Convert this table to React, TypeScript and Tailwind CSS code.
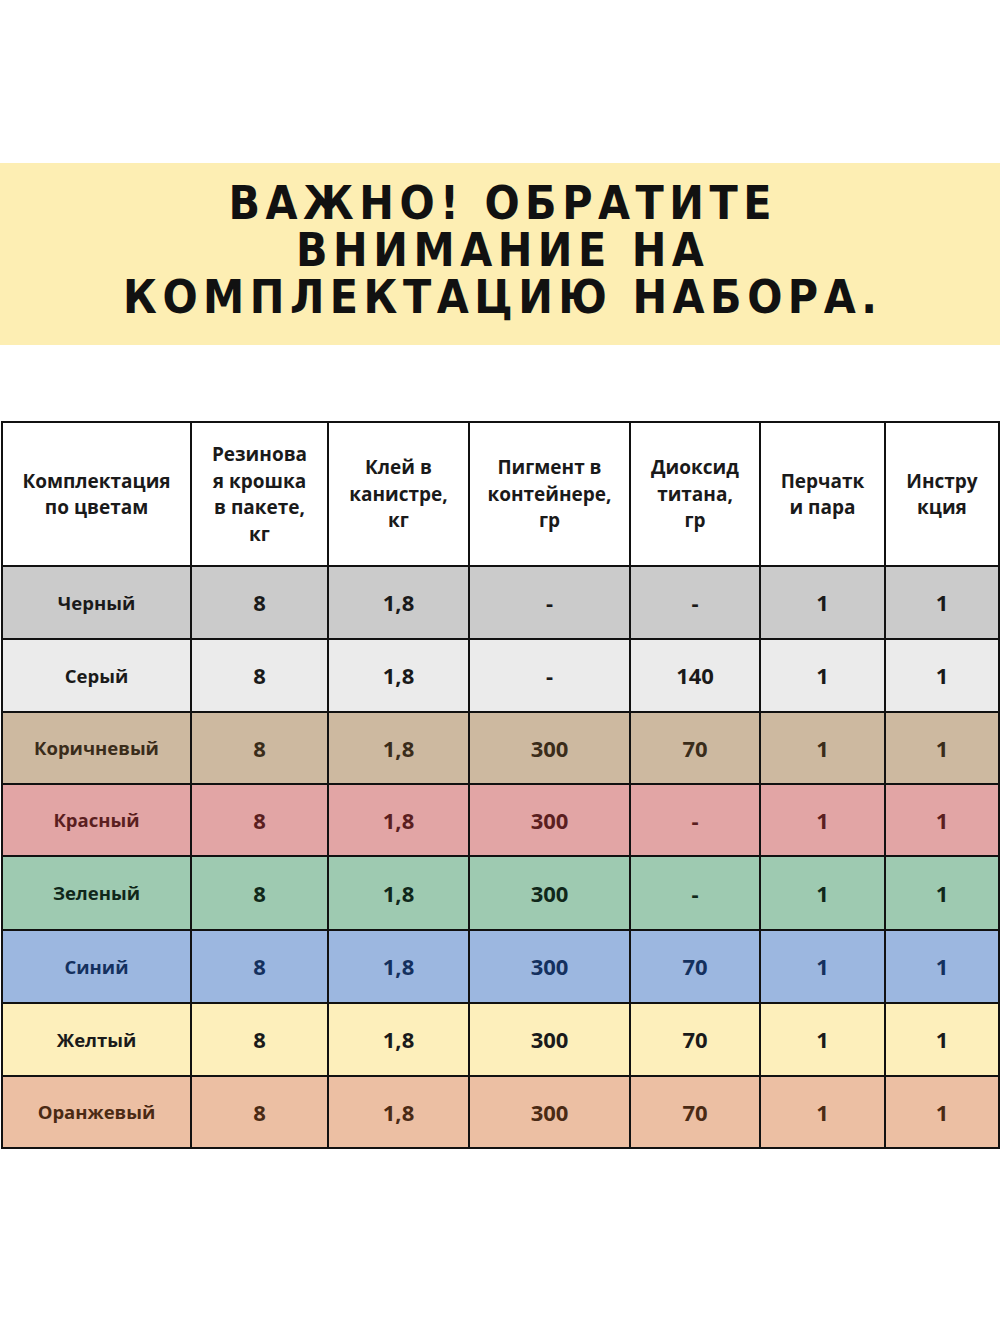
const headers = [
  ['Комплектация', 'по цветам'],
  ['Резинова', 'я крошка', 'в пакете,', 'кг'],
  ['Клей в', 'канистре,', 'кг'],
  ['Пигмент в', 'контейнере,', 'гр'],
  ['Диоксид', 'титана,', 'гр'],
  ['Перчатк', 'и пара'],
  ['Инстру', 'кция'],
];

const widths = ['w-[189px]', 'w-[137px]', 'w-[141px]', 'w-[161px]', 'w-[130px]', 'w-[125px]', 'w-[114px]'];

const rows = [
  { name: 'Черный', vals: ['8', '1,8', '-', '-', '1', '1'], bg: 'bg-[#cbcbcb]', text: 'text-[#1a1a1a]', h: 'h-[73px]' },
  { name: 'Серый', vals: ['8', '1,8', '-', '140', '1', '1'], bg: 'bg-[#ebebeb]', text: 'text-[#1a1a1a]', h: 'h-[73px]' },
  { name: 'Коричневый', vals: ['8', '1,8', '300', '70', '1', '1'], bg: 'bg-[#cdb9a0]', text: 'text-[#3a2c1a]', h: 'h-[72px]' },
  { name: 'Красный', vals: ['8', '1,8', '300', '-', '1', '1'], bg: 'bg-[#e2a5a5]', text: 'text-[#5a1e20]', h: 'h-[72px]' },
  { name: 'Зеленый', vals: ['8', '1,8', '300', '-', '1', '1'], bg: 'bg-[#9ecab1]', text: 'text-[#10271a]', h: 'h-[74px]' },
  { name: 'Синий', vals: ['8', '1,8', '300', '70', '1', '1'], bg: 'bg-[#9cb7e0]', text: 'text-[#14305e]', h: 'h-[73px]' },
  { name: 'Желтый', vals: ['8', '1,8', '300', '70', '1', '1'], bg: 'bg-[#fdefbb]', text: 'text-[#1a1a1a]', h: 'h-[73px]' },
  { name: 'Оранжевый', vals: ['8', '1,8', '300', '70', '1', '1'], bg: 'bg-[#ecbfa3]', text: 'text-[#4a2a14]', h: 'h-[72px]' },
];

export default function App() {
  return (
    <div className="w-[1000px] h-[1333px] bg-white font-['Open_Sans',sans-serif]">
      <div className="h-[163px]" />
      <div className="h-[182px] bg-[#fdeeb3] flex flex-col items-center justify-center pb-2">
        <h1 className="font-['DejaVu_Sans',sans-serif] font-stretch-condensed font-bold text-[46px] leading-[47px] tracking-[0.12em] text-[#111] text-center uppercase pl-[0.12em]">
          ВАЖНО! ОБРАТИТЕ
          <br />
          ВНИМАНИЕ НА
          <br />
          КОМПЛЕКТАЦИЮ НАБОРА.
        </h1>
      </div>
      <div className="h-[76px]" />
      <table className="ml-px border-collapse table-fixed w-[997px]">
        <thead>
          <tr className="h-[144px] bg-white">
            {headers.map((lines, i) => (
              <th
                key={i}
                className={`${widths[i]} border-2 border-[#111] px-1 text-[19px] leading-[26.5px] font-bold text-[#1a1a1a] align-middle whitespace-nowrap`}
              >
                {lines.map((l, j) => (
                  <div key={j}>{l}</div>
                ))}
              </th>
            ))}
          </tr>
        </thead>
        <tbody>
          {rows.map((r) => (
            <tr key={r.name} className={`${r.h} ${r.bg} ${r.text}`}>
              <td className="border-2 border-[#111] text-center text-[18.5px] font-bold">{r.name}</td>
              {r.vals.map((v, i) => (
                <td key={i} className="border-2 border-[#111] text-center text-[22px] font-bold">
                  {v}
                </td>
              ))}
            </tr>
          ))}
        </tbody>
      </table>
    </div>
  );
}
